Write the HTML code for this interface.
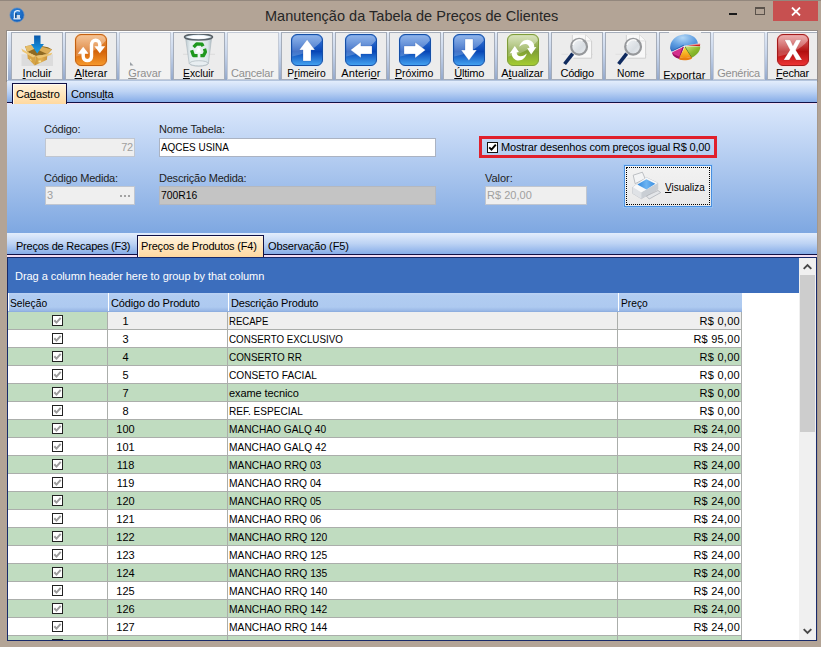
<!DOCTYPE html>
<html lang="pt-BR"><head><meta charset="utf-8"><title>Manutenção da Tabela de Preços de Clientes</title>
<style>
*{box-sizing:border-box;margin:0;padding:0}
html,body{width:821px;height:647px;overflow:hidden;background:#b3a496}
body{font-family:"Liberation Sans",sans-serif;font-size:11px;color:#000}
u{text-decoration:underline;text-underline-offset:1px;text-decoration-thickness:1px}
span{white-space:nowrap}
#win{position:absolute;left:0;top:0;width:821px;height:647px;background:#b3a496;overflow:hidden}
#topline{position:absolute;left:0;top:0;width:821px;height:1px;background:#93877d}
#appicon{position:absolute;left:8px;top:6px}
#title{position:absolute;left:265px;top:5px;height:22px;line-height:22px;font-size:14.5px;color:#262626;white-space:nowrap}
#btn-min{position:absolute;left:729px;top:13px;width:8px;height:2px;background:#1a1a1a}
#btn-max{position:absolute;left:755px;top:7px;width:10px;height:8px;border:1px solid #5a524b;border-top-width:2px}
#btn-close{position:absolute;left:773px;top:1px;width:45px;height:20px;background:#c75050}
#btn-close svg{position:absolute;left:18px;top:6px}
#edge{position:absolute;left:6px;top:30px;width:812px;height:52px;border:1px solid #948d88;border-bottom:none}
#toolbar{position:absolute;left:7px;top:31px;width:810px;height:50px;background:linear-gradient(#e3ebf7,#c6d4ea 45%,#93a8cb);border-top:1px solid #fff;border-bottom:1px solid #b3c4dd;box-shadow:inset 1px 0 0 #f4f8fd;overflow:hidden}
.tb{position:absolute;top:0;width:52px;height:48px;background:#ececec;border:1px solid #a5adba}
.tb.dis{background:#f2f2f2;border-color:#c3cad6}
.tb svg{position:absolute;left:9px;top:1px}
.tb svg.sq{left:8px;top:0}
.tb .lab{position:absolute;width:80px;top:34px;height:13px;line-height:13px;text-align:center;white-space:nowrap}
.tb.dis .lab{color:#8f8f8f}
.tb.exp .lab{top:36px}
.tabs{position:absolute;left:7px;width:810px;height:22px;background:linear-gradient(#e3edfc,#bdd3f4 50%,#86ade8);border-bottom:1px solid #101045}
#tabs1{top:81px}
#tabs2{top:233px}
.pink{position:absolute;left:7px;width:810px;background:#f3def3}
.tab{position:absolute;top:2px;height:19px}
.tab .tl{position:absolute;top:5px;line-height:13px}
.tab.act{background:linear-gradient(#fff3dc,#ffd9a0);border:1px solid #101045;border-bottom:none;height:20px;box-shadow:inset 1px 1px 0 #fffaf0}
.tab.act .tl{top:4px;margin-left:-1px}
.tabs{z-index:2}
#tabs1 .tab.act{height:21px}
#tabs2 .tab.act{height:22px}
#panel{position:absolute;left:7px;top:104px;width:810px;height:129px;background:linear-gradient(#dbe8fc,#7ea7e1)}
.lbl{position:absolute;white-space:nowrap;line-height:13px;color:#1e1e1e}
.inp{position:absolute;height:19px;line-height:17px;border:1px solid #abb3c2;background:#fff;padding:0 1px;white-space:nowrap;overflow:hidden}
.inp.dis{background:#efefef;color:#a0a0a0;border-color:#c0c6d0}
.inp.ro{background:#c4c4c4;border-color:#b4b8bf}
.inp.r{text-align:right}
.dots{position:absolute;right:4px;top:8px;width:10px;height:2px}
.dots i{position:absolute;top:0;width:2px;height:2px;background:#a2a2a2}
.dots i:nth-child(1){left:0}.dots i:nth-child(2){left:4px}.dots i:nth-child(3){left:8px}
#redbox{position:absolute;left:472px;top:32px;width:238px;height:22px;border:3px solid #e0202c}
.cb{position:absolute;left:5px;top:3px;width:11px;height:11px;background:#fff;border:1px solid #111}
.cb svg{position:absolute;left:0;top:0}
.cbl{position:absolute;left:19px;top:2px;line-height:13px;white-space:nowrap}
#btnvis{position:absolute;left:617px;top:61px;width:88px;height:42px;background:linear-gradient(#f2f2f2,#e9e9e9);border:1px solid #4a8fe0;box-shadow:0 0 0 1px rgba(150,200,250,0.6)}
#btnvis .focus{position:absolute;left:1px;top:1px;right:1px;bottom:1px;border:1px dotted #000}
#btnvis svg{position:absolute;left:5px;top:4px}
#btnvis .bl{position:absolute;left:40px;top:15px;line-height:13px}
#grid{position:absolute;left:7px;top:257px;width:810px;height:384px;background:#fff;border:1px solid #182a6a;overflow:hidden}
#groupby{position:absolute;left:0;top:0;width:791px;height:35px;background:#3c6ebd;color:#fff;line-height:37px;padding-left:7px;white-space:nowrap}
#hdr{position:absolute;left:0;top:35px;width:734px;height:19px;background:linear-gradient(#bbd2f4,#b1ccf1 15%,#aecaf0 78%,#97b6e5);border-bottom:1px solid #8fafe0}
.hc{position:absolute;top:0;height:18px;line-height:20px;padding-left:2px;border-left:1px solid #fff;white-space:nowrap}
.hc:first-child{padding-left:1px}
.row{position:absolute;left:0;width:734px;height:18px;border-bottom:1px solid #abaeab}
.row.g{background:#c0dcc0}
.row.w{background:#fff}
.row.foc .c2,.row.foc .c3,.row.foc .c4{background:#efefef}
.c{position:absolute;top:0;height:17px;line-height:18px;white-space:nowrap;border-right:1px solid #abaeab}
.c1{left:0;width:100px}
.c2{left:100px;width:120px}
.c2 .n{position:absolute;left:0;width:35px;text-align:center}
.c3{left:220px;width:390px;padding-left:1px}
.c4{left:610px;width:124px;text-align:right;padding-right:1px}
.ck{position:absolute;left:44px;top:3px;width:11px;height:11px;border:1px solid #222;background:#fff}
.ck svg{position:absolute;left:0;top:0}
#sb{position:absolute;left:791px;top:0;width:17px;height:382px;background:#f0f0f0}
#sb .up{position:absolute;left:0;top:0;width:17px;height:17px}
#sb .dn{position:absolute;left:0;bottom:0;width:17px;height:17px}
#sb .thumb{position:absolute;left:1px;top:17px;width:15px;height:157px;background:#cdcdcd}
#sb svg{position:absolute;left:4px;top:5px}
#rcol{position:absolute;left:817px;top:82px;width:1px;height:559px;background:#a5988c}
</style></head><body>
<div id="win">
<div id="topline"></div>
<svg id="appicon" width="18" height="18" viewBox="0 0 18 18"><defs><radialGradient id="gapp" cx="0.400" cy="0.350" r="0.700"><stop offset="0" stop-color="#2f86dc"/><stop offset="1" stop-color="#0f5cb8"/></radialGradient></defs><circle cx="9" cy="9" r="7.100" fill="url(#gapp)" stroke="#5a8fcd" stroke-width="0.700"/><path d="M6.400 12.500V7.200C6.400 4.800 9.500 3.900 12 5.200" fill="none" stroke="#e6f0fb" stroke-width="1.200"/><rect x="7.500" y="7.200" width="1" height="4.500" fill="#0a2a55"/><rect x="8.700" y="9" width="3.300" height="3.200" fill="#d0dceb"/><rect x="5.400" y="12.200" width="7.200" height="1.200" fill="#f2f7fd"/></svg>
<div id="title"><span style="letter-spacing:0.023px;">Manutenção da Tabela de Preços de Clientes</span></div>
<div id="btn-min"></div><div id="btn-max"></div><div id="btn-close"><svg width="10" height="9" viewBox="0 0 10 9"><path d="M1 0.500L9 8.500M9 0.500L1 8.500" stroke="#fff" stroke-width="1.800" fill="none"/></svg></div>
<div id="edge"></div><div id="rcol"></div>
<div id="toolbar">
<div class="tb" style="left:4px"><svg width="32" height="32" viewBox="0 0 32 32"><defs><linearGradient id="gar" x1="0" y1="0" x2="0" y2="1"><stop offset="0" stop-color="#0a58aa"/><stop offset="1" stop-color="#1aa4ec"/></linearGradient><linearGradient id="gbx" x1="0" y1="0" x2="1" y2="0"><stop offset="0" stop-color="#c99434"/><stop offset="0.500" stop-color="#e2b254"/><stop offset="1" stop-color="#c89038"/></linearGradient></defs><rect x="0.500" y="20.300" width="31.500" height="11.700" fill="#dcdcdc"/><path d="M4 12.200L14 10.800L27 13.200L31 15.400L26.500 20.300L14.800 21.900L6.200 18Z" fill="#8f6a22"/><path d="M4 12.200L14 10.800L16.500 13.500L6.200 18Z" fill="#e6bd68"/><path d="M18 12L31 15.400L26.500 20.300L16.500 15.500Z" fill="#dcae58"/><path d="M6.200 18L14.800 21.900L13.700 31.400L6.700 24.200Z" fill="#d7a344"/><path d="M14.800 21.900L26.500 20.300L25.900 25.800L13.700 31.400Z" fill="url(#gbx)"/><path d="M0.300 14.400L6.200 18L14.800 21.900L12 23.500L1.500 17.500Z" fill="#eec878"/><path d="M14.800 21.900L26.500 20.300L31.500 18.600L30 21L17.500 24.500Z" fill="#ecc470"/><path d="M17.500 26.500h2.500v1.800h-2.500z" fill="#f6e6a0"/><path d="M9 24.500l1.500 1.200v1.600L9 26z" fill="#f2dc90"/><path d="M13.100 1.600H19.500V10H22.900L16.200 19.400L10 10H13.100Z" fill="url(#gar)"/></svg><span class="lab" style="left:-14.9px"><span style="letter-spacing:-0.051px;"><u>I</u>ncluir</span></span></div>
<div class="tb" style="left:58px"><svg width="34" height="34" viewBox="-1 -1 34 34" class="sq"><defs><linearGradient id="ga" x1="0" y1="0" x2="0" y2="1"><stop offset="0" stop-color="#ee9a4c"/><stop offset="0.550" stop-color="#d4640a"/><stop offset="1" stop-color="#f79a2c"/></linearGradient><linearGradient id="ha" x1="0" y1="0" x2="0" y2="1"><stop offset="0" stop-color="#fff" stop-opacity="0.420"/><stop offset="1" stop-color="#fff" stop-opacity="0.200"/></linearGradient></defs><rect x="-0.500" y="-0.500" width="33" height="33" rx="6.500" fill="none" stroke="#fde3c4" stroke-opacity="0.700" stroke-width="1"/><rect x="0.500" y="0.500" width="31" height="31" rx="5.500" fill="url(#ga)" stroke="#c46010" stroke-width="1"/><path d="M1.200 22.500C12 20.500 24 15.500 30.800 6.500V6.500a5.300 5.300 0 0 0-5.300-5.300H6.500a5.300 5.300 0 0 0-5.300 5.300Z" fill="url(#ha)"/><path d="M8.200 19V22.500a4.150 4.150 0 0 0 8.300 0V10.400a4.150 4.150 0 0 1 8.300 0V13" fill="none" stroke="#fff" stroke-width="3.400"/><path d="M2.800 19.800L8.200 12.800L13.600 19.800Z" fill="#fff"/><path d="M19.400 12.300L24.800 19.300L30.200 12.300Z" fill="#fff"/></svg><span class="lab" style="left:-15.0px"><span style="letter-spacing:0.056px;"><u>A</u>lterar</span></span></div>
<div class="tb dis" style="left:112px"><svg width="4" height="4" viewBox="0 0 4 4" style="left:10px;top:29px"><path d="M0 0L3.500 3.500H0Z" fill="#9aa0a6"/></svg><span class="lab" style="left:-15.2px"><span style="letter-spacing:-0.054px;"><u>G</u>ravar</span></span></div>
<div class="tb" style="left:166px"><svg width="32" height="33" viewBox="0 0 32 33"><defs><linearGradient id="gbin" x1="0" y1="0" x2="1" y2="0"><stop offset="0" stop-color="#b9c7cd"/><stop offset="0.180" stop-color="#e4edf0"/><stop offset="0.500" stop-color="#eef3f5"/><stop offset="0.850" stop-color="#dbe5e9"/><stop offset="1" stop-color="#adbcc3"/></linearGradient></defs><path d="M0 20.300H6M26 20.300H32" stroke="#d8d8d8" stroke-width="0.800"/><path d="M2.500 3.500L6.200 29.500C7 33 24.600 33 25.400 29.500L28.700 3.500Z" fill="url(#gbin)" stroke="#a9b6bc" stroke-width="0.600"/><ellipse cx="15.800" cy="29.300" rx="9.200" ry="2.600" fill="#e8eef1" stroke="#aab6bc" stroke-width="0.700"/><ellipse cx="15.500" cy="3" rx="14" ry="2.900" fill="#e4f0f7" stroke="#596268" stroke-width="1.500"/><ellipse cx="15.500" cy="3.300" rx="10" ry="1.500" fill="#fff"/><g fill="none" stroke="#1f981f" stroke-width="3.300" stroke-linejoin="round"><path d="M10.600 13.200L13.700 9.800L19 10.200L20 12.200"/><path d="M8.600 16.200L10.400 21.600H14.600"/><path d="M21.500 14.700L22.400 18L20.400 21.600H17.400"/></g><path d="M15.600 12.500L18.500 18.500H12.700Z" fill="#fff" opacity="0.900"/></svg><span class="lab" style="left:-15.2px"><span style="display:inline-block;transform:scaleX(0.9420);transform-origin:center center;"><u>E</u>xcluir</span></span></div>
<div class="tb dis" style="left:220px"><span class="lab" style="left:-15.6px"><span style="letter-spacing:-0.154px;">Ca<u>n</u>celar</span></span></div>
<div class="tb" style="left:274px"><svg width="34" height="34" viewBox="-1 -1 34 34" class="sq"><defs><linearGradient id="gu" x1="0" y1="0" x2="0" y2="1"><stop offset="0" stop-color="#3f7fdc"/><stop offset="0.550" stop-color="#0746b6"/><stop offset="1" stop-color="#45a4f2"/></linearGradient><linearGradient id="hu" x1="0" y1="0" x2="0" y2="1"><stop offset="0" stop-color="#fff" stop-opacity="0.420"/><stop offset="1" stop-color="#fff" stop-opacity="0.200"/></linearGradient></defs><rect x="-0.500" y="-0.500" width="33" height="33" rx="6.500" fill="none" stroke="#dbe8fa" stroke-opacity="0.700" stroke-width="1"/><rect x="0.500" y="0.500" width="31" height="31" rx="5.500" fill="url(#gu)" stroke="#154fa6" stroke-width="1"/><path d="M1.200 22.500C12 20.500 24 15.500 30.800 6.500V6.500a5.300 5.300 0 0 0-5.300-5.300H6.500a5.300 5.300 0 0 0-5.300 5.300Z" fill="url(#hu)"/><path d="M16.100 5.600L23.900 15.900H20V27H12V15.900H8.300Z" fill="#fff" stroke="#1a4a9a" stroke-opacity="0.350" stroke-width="0.600" transform="rotate(0 16 16)"/></svg><span class="lab" style="left:-15.4px"><span style="display:inline-block;transform:scaleX(0.9349);transform-origin:center center;">P<u>r</u>imeiro</span></span></div>
<div class="tb" style="left:328px"><svg width="34" height="34" viewBox="-1 -1 34 34" class="sq"><defs><linearGradient id="gl" x1="0" y1="0" x2="0" y2="1"><stop offset="0" stop-color="#3f7fdc"/><stop offset="0.550" stop-color="#0746b6"/><stop offset="1" stop-color="#45a4f2"/></linearGradient><linearGradient id="hl" x1="0" y1="0" x2="0" y2="1"><stop offset="0" stop-color="#fff" stop-opacity="0.420"/><stop offset="1" stop-color="#fff" stop-opacity="0.200"/></linearGradient></defs><rect x="-0.500" y="-0.500" width="33" height="33" rx="6.500" fill="none" stroke="#dbe8fa" stroke-opacity="0.700" stroke-width="1"/><rect x="0.500" y="0.500" width="31" height="31" rx="5.500" fill="url(#gl)" stroke="#154fa6" stroke-width="1"/><path d="M1.200 22.500C12 20.500 24 15.500 30.800 6.500V6.500a5.300 5.300 0 0 0-5.300-5.300H6.500a5.300 5.300 0 0 0-5.300 5.300Z" fill="url(#hl)"/><path d="M16.100 5.600L23.900 15.900H20V27H12V15.900H8.300Z" fill="#fff" stroke="#1a4a9a" stroke-opacity="0.350" stroke-width="0.600" transform="rotate(270 16 16)"/></svg><span class="lab" style="left:-15.1px"><span style="letter-spacing:0.094px;">Anteri<u>o</u>r</span></span></div>
<div class="tb" style="left:382px"><svg width="34" height="34" viewBox="-1 -1 34 34" class="sq"><defs><linearGradient id="gr" x1="0" y1="0" x2="0" y2="1"><stop offset="0" stop-color="#3f7fdc"/><stop offset="0.550" stop-color="#0746b6"/><stop offset="1" stop-color="#45a4f2"/></linearGradient><linearGradient id="hr" x1="0" y1="0" x2="0" y2="1"><stop offset="0" stop-color="#fff" stop-opacity="0.420"/><stop offset="1" stop-color="#fff" stop-opacity="0.200"/></linearGradient></defs><rect x="-0.500" y="-0.500" width="33" height="33" rx="6.500" fill="none" stroke="#dbe8fa" stroke-opacity="0.700" stroke-width="1"/><rect x="0.500" y="0.500" width="31" height="31" rx="5.500" fill="url(#gr)" stroke="#154fa6" stroke-width="1"/><path d="M1.200 22.500C12 20.500 24 15.500 30.800 6.500V6.500a5.300 5.300 0 0 0-5.300-5.300H6.500a5.300 5.300 0 0 0-5.300 5.300Z" fill="url(#hr)"/><path d="M16.100 5.600L23.900 15.900H20V27H12V15.900H8.300Z" fill="#fff" stroke="#1a4a9a" stroke-opacity="0.350" stroke-width="0.600" transform="rotate(90 16 16)"/></svg><span class="lab" style="left:-15.5px"><span style="display:inline-block;transform:scaleX(0.9539);transform-origin:center center;"><u>P</u>róximo</span></span></div>
<div class="tb" style="left:436px"><svg width="34" height="34" viewBox="-1 -1 34 34" class="sq"><defs><linearGradient id="gd" x1="0" y1="0" x2="0" y2="1"><stop offset="0" stop-color="#3f7fdc"/><stop offset="0.550" stop-color="#0746b6"/><stop offset="1" stop-color="#45a4f2"/></linearGradient><linearGradient id="hd" x1="0" y1="0" x2="0" y2="1"><stop offset="0" stop-color="#fff" stop-opacity="0.420"/><stop offset="1" stop-color="#fff" stop-opacity="0.200"/></linearGradient></defs><rect x="-0.500" y="-0.500" width="33" height="33" rx="6.500" fill="none" stroke="#dbe8fa" stroke-opacity="0.700" stroke-width="1"/><rect x="0.500" y="0.500" width="31" height="31" rx="5.500" fill="url(#gd)" stroke="#154fa6" stroke-width="1"/><path d="M1.200 22.500C12 20.500 24 15.500 30.800 6.500V6.500a5.300 5.300 0 0 0-5.300-5.300H6.500a5.300 5.300 0 0 0-5.300 5.300Z" fill="url(#hd)"/><path d="M16.100 5.600L23.900 15.900H20V27H12V15.900H8.300Z" fill="#fff" stroke="#1a4a9a" stroke-opacity="0.350" stroke-width="0.600" transform="rotate(180 16 16)"/></svg><span class="lab" style="left:-14.8px"><span style="letter-spacing:-0.231px;"><u>Ú</u>ltimo</span></span></div>
<div class="tb" style="left:490px"><svg width="34" height="34" viewBox="-1 -1 34 34" class="sq"><defs><linearGradient id="gf" x1="0" y1="0" x2="0" y2="1"><stop offset="0" stop-color="#bdd08c"/><stop offset="0.550" stop-color="#80a036"/><stop offset="1" stop-color="#a6ce30"/></linearGradient><linearGradient id="hf" x1="0" y1="0" x2="0" y2="1"><stop offset="0" stop-color="#fff" stop-opacity="0.420"/><stop offset="1" stop-color="#fff" stop-opacity="0.200"/></linearGradient></defs><rect x="-0.500" y="-0.500" width="33" height="33" rx="6.500" fill="none" stroke="#eef5d8" stroke-opacity="0.700" stroke-width="1"/><rect x="0.500" y="0.500" width="31" height="31" rx="5.500" fill="url(#gf)" stroke="#7e9c3a" stroke-width="1"/><path d="M1.200 22.500C12 20.500 24 15.500 30.800 6.500V6.500a5.300 5.300 0 0 0-5.300-5.300H6.500a5.300 5.300 0 0 0-5.300 5.300Z" fill="url(#hf)"/><path d="M12.300 12.800C13.500 7.500 19 4.300 23.300 6.500C26.300 8 27.600 11 27.300 13.300L29.400 13L24.200 20.400L20.100 14.300L22.400 14C22.200 11.700 20.700 10.200 18.600 10.100C16.200 10 14 11.200 12.300 12.800Z" fill="#fff"/><path d="M12.300 12.800C13.500 7.500 19 4.300 23.300 6.500C26.300 8 27.600 11 27.300 13.300L29.400 13L24.200 20.400L20.100 14.300L22.400 14C22.200 11.700 20.700 10.200 18.600 10.100C16.200 10 14 11.200 12.300 12.800Z" fill="#fff" transform="rotate(180 16 16.200)"/></svg><span class="lab" style="left:-15.6px"><span style="letter-spacing:-0.079px;">A<u>t</u>ualizar</span></span></div>
<div class="tb" style="left:544px"><svg width="32" height="32" viewBox="0 0 32 32"><defs><linearGradient id="gln" x1="0" y1="0" x2="1" y2="1"><stop offset="0" stop-color="#f4f6f8"/><stop offset="0.600" stop-color="#d8dde2"/><stop offset="1" stop-color="#eef1f4"/></linearGradient></defs><path d="M0.500 20.300H7M28 20.300H32" stroke="#dcdcdc" stroke-width="0.800"/><path d="M11.200 1H24.500L30.600 6.900V24.200H11.200Z" fill="#f8f8f8"/><path d="M24.500 1L30.600 6.900V24.200H12.500" fill="none" stroke="#cfcfcf" stroke-width="1"/><path d="M11.400 1V9" stroke="#c4c4c4" stroke-width="0.700"/><path d="M24.500 1V6.900H30.600" fill="#fafafa" stroke="#d4d4d4" stroke-width="0.700"/><path d="M11.700 19.700L3.600 30" stroke="#0f2a5e" stroke-width="3.600" stroke-linecap="butt"/><circle cx="18.100" cy="12.700" r="7.900" fill="url(#gln)" stroke="#96989b" stroke-width="2.200"/><path d="M12 11a6.300 6.300 0 0 1 9.500-4.200" stroke="#fff" stroke-width="1.500" fill="none" opacity="0.900"/></svg><span class="lab" style="left:-14.9px"><span style="letter-spacing:-0.260px;">Código</span></span></div>
<div class="tb" style="left:598px"><svg width="32" height="32" viewBox="0 0 32 32"><defs><linearGradient id="gln" x1="0" y1="0" x2="1" y2="1"><stop offset="0" stop-color="#f4f6f8"/><stop offset="0.600" stop-color="#d8dde2"/><stop offset="1" stop-color="#eef1f4"/></linearGradient></defs><path d="M0.500 20.300H7M28 20.300H32" stroke="#dcdcdc" stroke-width="0.800"/><path d="M11.200 1H24.500L30.600 6.900V24.200H11.200Z" fill="#f8f8f8"/><path d="M24.500 1L30.600 6.900V24.200H12.500" fill="none" stroke="#cfcfcf" stroke-width="1"/><path d="M11.400 1V9" stroke="#c4c4c4" stroke-width="0.700"/><path d="M24.500 1V6.900H30.600" fill="#fafafa" stroke="#d4d4d4" stroke-width="0.700"/><path d="M11.700 19.700L3.600 30" stroke="#0f2a5e" stroke-width="3.600" stroke-linecap="butt"/><circle cx="18.100" cy="12.700" r="7.900" fill="url(#gln)" stroke="#96989b" stroke-width="2.200"/><path d="M12 11a6.300 6.300 0 0 1 9.500-4.200" stroke="#fff" stroke-width="1.500" fill="none" opacity="0.900"/></svg><span class="lab" style="left:-15.0px"><span style="display:inline-block;transform:scaleX(0.9304);transform-origin:center center;">Nome</span></span></div>
<div class="tb exp" style="left:652px"><svg width="32" height="32" viewBox="0 0 32 32" style="overflow:visible"><defs><radialGradient id="gpb" cx="0.450" cy="0.200" r="0.800"><stop offset="0" stop-color="#b4d8f6"/><stop offset="0.600" stop-color="#5b9be0"/><stop offset="1" stop-color="#3a78c8"/></radialGradient><linearGradient id="gpy" x1="0" y1="0" x2="0" y2="1"><stop offset="0" stop-color="#fbe23a"/><stop offset="1" stop-color="#f28c12"/></linearGradient><linearGradient id="gpg" x1="0" y1="0" x2="1" y2="1"><stop offset="0" stop-color="#cfe47a"/><stop offset="0.500" stop-color="#8cba2c"/><stop offset="1" stop-color="#6a9c1c"/></linearGradient></defs><rect x="0" y="-2" width="32" height="3" fill="#ececec"/><path d="M14.800 12.700L3.300 18.300C3.300 21.500 6 23.800 10.600 24.700Z" fill="#d42f8c"/><path d="M14.800 12.700L10.600 24.700L9.600 24.400L13.600 13.200Z" fill="#8e0e58"/><path d="M3.300 18.300C3.300 21.500 6 23.800 10 24.600V22.400C6.500 21.600 4 20 3.300 18.300Z" fill="#9e1060"/><path d="M15.800 13.200L22.800 22.500C19 24.200 14 24.400 10.400 23.600Z" fill="url(#gpy)"/><path d="M10.400 23.600C14 24.400 19 24.200 22.800 22.500V24.800C19 26.500 14 26.600 10.400 25.800Z" fill="#e87e10"/><path d="M16.300 12.500L31.200 12.500C31.500 17 28 21 23.200 23.500Z" fill="url(#gpg)"/><path d="M16.300 12.500L23.200 23.500L22.600 23.800L15.800 13.200Z" fill="#4f7a14"/><path d="M17.300 11.300L31.200 10.300L30.900 12.300Z" fill="#d02020"/><path d="M17.300 11.300L31.200 10.300L31 9.600Z" fill="#f09090"/><path d="M14.800 11.800L2.800 17.600C-1.500 11 4 1.200 15 0.400C23 -0.100 28.500 4.500 28.900 9.600Z" fill="url(#gpb)"/><path d="M2.800 17.600C1.500 15.500 1 13.500 1.200 12C1.500 14 2.200 15.500 3.200 16.400L14.800 10.800V11.800Z" fill="#2a62b4"/></svg><span class="lab" style="left:-15.7px"><span style="letter-spacing:0.078px;">Exportar</span></span></div>
<div class="tb dis" style="left:706px"><span class="lab" style="left:-15.4px"><span style="letter-spacing:-0.230px;">Genérica</span></span></div>
<div class="tb" style="left:760px"><svg width="34" height="34" viewBox="-1 -1 34 34" class="sq"><defs><linearGradient id="gc" x1="0" y1="0" x2="0" y2="1"><stop offset="0" stop-color="#e07878"/><stop offset="0.550" stop-color="#b20e0e"/><stop offset="1" stop-color="#ee3434"/></linearGradient><linearGradient id="hc" x1="0" y1="0" x2="0" y2="1"><stop offset="0" stop-color="#fff" stop-opacity="0.420"/><stop offset="1" stop-color="#fff" stop-opacity="0.200"/></linearGradient></defs><rect x="-0.500" y="-0.500" width="33" height="33" rx="6.500" fill="none" stroke="#fbdada" stroke-opacity="0.700" stroke-width="1"/><rect x="0.500" y="0.500" width="31" height="31" rx="5.500" fill="url(#gc)" stroke="#a31a1a" stroke-width="1"/><path d="M1.200 22.500C12 20.500 24 15.500 30.800 6.500V6.500a5.300 5.300 0 0 0-5.300-5.300H6.500a5.300 5.300 0 0 0-5.300 5.300Z" fill="url(#hc)"/><path d="M7.500 5.800H13.100L15.900 11.800L19.200 5.800H24.200L18.700 15.900L25 25.900H19.200L15.900 19.900L12.200 25.900H6.700L13 15.900Z" fill="#fff" stroke="#7a0c0c" stroke-opacity="0.300" stroke-width="0.500"/></svg><span class="lab" style="left:-15.5px"><span style="letter-spacing:-0.228px;"><u>F</u>echar</span></span></div>
</div>
<div id="tabs1" class="tabs"><div class="tab act" style="left:5px;width:55px"><span class="tl" style="left:4px"><span style="letter-spacing:-0.107px;">Ca<u>d</u>astro</span></span></div><div class="tab" style="left:60px;width:52px"><span class="tl" style="left:4px"><span style="letter-spacing:-0.117px;">Consu<u>l</u>ta</span></span></div></div>
<div class="pink" style="top:103px;height:1px"></div>
<div id="panel">
<span class="lbl" style="left:37px;top:19px"><span style="letter-spacing:-0.232px;">Código:</span></span>
<div class="inp dis r" style="left:38px;top:34px;width:90px"><span style="letter-spacing:-0.225px;">72</span></div>
<span class="lbl" style="left:152px;top:19px"><span style="letter-spacing:-0.156px;">Nome Tabela:</span></span>
<div class="inp" style="left:152px;top:34px;width:277px"><span style="display:inline-block;transform:scaleX(0.9017);transform-origin:left center;">AQCES USINA</span></div>
<span class="lbl" style="left:37px;top:68px"><span style="letter-spacing:-0.233px;">Código Medida:</span></span>
<div class="inp dis" style="left:38px;top:82px;width:90px"><span>3</span><span class="dots"><i></i><i></i><i></i></span></div>
<span class="lbl" style="left:152px;top:68px"><span style="letter-spacing:-0.223px;">Descrição Medida:</span></span>
<div class="inp ro" style="left:152px;top:82px;width:277px"><span style="display:inline-block;transform:scaleX(0.9417);transform-origin:left center;">700R16</span></div>
<div id="redbox"><span class="cb"><svg width="9" height="9" viewBox="0 0 9 9"><path d="M1.200 4.300L3.500 6.700L7.800 1.600" stroke="#000" stroke-width="1.900" fill="none"/></svg></span><span class="cbl"><span style="letter-spacing:-0.160px;">Mostrar desenhos com preços igual R$ 0,00</span></span></div>
<span class="lbl" style="left:478px;top:68px"><span style="letter-spacing:-0.020px;">Valor:</span></span>
<div class="inp dis" style="left:478px;top:82px;width:102px"><span style="letter-spacing:0.018px;">R$ 20,00</span></div>
<div id="btnvis"><div class="focus"></div><svg width="32" height="30" viewBox="630 170 32 30"><defs><linearGradient id="gpt" x1="0" y1="0" x2="1" y2="0"><stop offset="0" stop-color="#2f86dc"/><stop offset="0.500" stop-color="#6db4f2"/><stop offset="1" stop-color="#3a8ee0"/></linearGradient></defs><path d="M633.200 175.200L642.400 172.200L645.100 178.600L635.200 183.700Z" fill="#f3f4f5" stroke="#aeb3b8" stroke-width="0.800"/><path d="M632.800 187.100L646.400 177.600L657.700 183L657.700 189.200L641.300 198.700L632.500 193.300Z" fill="#eceef0" stroke="#b4b8be" stroke-width="0.700"/><path d="M632.800 187.100L641.300 192.300V198.700L632.500 193.300Z" fill="#dfe2e6"/><path d="M641.300 192.300L657.700 183V189.200L641.300 198.700Z" fill="#c9ced4"/><path d="M632.800 187.100L646.400 177.600L657.700 183L641.300 192.300Z" fill="#f7f8f9"/><path d="M637.300 184.400L646.400 179.300L655.300 183.700L646.400 189.500Z" fill="url(#gpt)"/><path d="M646.400 196L658 190.500L660.700 192.600L649.200 199Z" fill="#e4e6e9" stroke="#a6abb1" stroke-width="0.700"/></svg><span class="bl"><span style="display:inline-block;transform:scaleX(0.9081);transform-origin:left center;"><u>V</u>isualiza</span></span></div>
</div>
<div id="tabs2" class="tabs"><div class="tab" style="left:3px;width:127px"><span class="tl" style="left:6px"><span style="letter-spacing:-0.224px;">Preços de Recapes (F3)</span></span></div><div class="tab act" style="left:130px;width:127px"><span class="tl" style="left:4px"><span style="letter-spacing:-0.176px;">Preços de Produtos (F4)</span></span></div><div class="tab" style="left:257px;width:92px"><span class="tl" style="left:4px"><span style="letter-spacing:-0.115px;">Observação (F5)</span></span></div></div>
<div class="pink" style="top:255px;height:2px"></div>
<div id="grid">
<div id="groupby"><span style="letter-spacing:-0.054px;">Drag a column header here to group by that column</span></div>
<div id="hdr"><div class="hc" style="left:0;width:99px"><span style="display:inline-block;transform:scaleX(0.9330);transform-origin:left center;">Seleção</span></div><div class="hc" style="left:100px;width:119px"><span style="letter-spacing:-0.173px;">Código do Produto</span></div><div class="hc" style="left:220px;width:389px"><span style="letter-spacing:-0.188px;">Descrição Produto</span></div><div class="hc" style="left:610px;width:124px"><span style="display:inline-block;transform:scaleX(0.9322);transform-origin:left center;">Preço</span></div></div>
<div class="row g foc" style="top:54px"><div class="c c1"><i class="ck"><svg width="9" height="9" viewBox="0 0 9 9"><path d="M1.300 4.200L3.500 6.600L7.700 1.800" stroke="#9c9c9c" stroke-width="2" fill="none"/></svg></i></div><div class="c c2"><span class="n">1</span></div><div class="c c3"><span style="display:inline-block;transform:scaleX(0.8707);transform-origin:left center;">RECAPE</span></div><div class="c c4"><span style="letter-spacing:0.296px;">R$ 0,00</span></div></div>
<div class="row w" style="top:72px"><div class="c c1"><i class="ck"><svg width="9" height="9" viewBox="0 0 9 9"><path d="M1.300 4.200L3.500 6.600L7.700 1.800" stroke="#9c9c9c" stroke-width="2" fill="none"/></svg></i></div><div class="c c2"><span class="n">3</span></div><div class="c c3"><span style="display:inline-block;transform:scaleX(0.8893);transform-origin:left center;">CONSERTO EXCLUSIVO</span></div><div class="c c4"><span style="letter-spacing:0.243px;">R$ 95,00</span></div></div>
<div class="row g" style="top:90px"><div class="c c1"><i class="ck"><svg width="9" height="9" viewBox="0 0 9 9"><path d="M1.300 4.200L3.500 6.600L7.700 1.800" stroke="#9c9c9c" stroke-width="2" fill="none"/></svg></i></div><div class="c c2"><span class="n">4</span></div><div class="c c3"><span style="display:inline-block;transform:scaleX(0.9000);transform-origin:left center;">CONSERTO RR</span></div><div class="c c4"><span style="letter-spacing:0.296px;">R$ 0,00</span></div></div>
<div class="row w" style="top:108px"><div class="c c1"><i class="ck"><svg width="9" height="9" viewBox="0 0 9 9"><path d="M1.300 4.200L3.500 6.600L7.700 1.800" stroke="#9c9c9c" stroke-width="2" fill="none"/></svg></i></div><div class="c c2"><span class="n">5</span></div><div class="c c3"><span style="display:inline-block;transform:scaleX(0.9227);transform-origin:left center;">CONSETO FACIAL</span></div><div class="c c4"><span style="letter-spacing:0.296px;">R$ 0,00</span></div></div>
<div class="row g" style="top:126px"><div class="c c1"><i class="ck"><svg width="9" height="9" viewBox="0 0 9 9"><path d="M1.300 4.200L3.500 6.600L7.700 1.800" stroke="#9c9c9c" stroke-width="2" fill="none"/></svg></i></div><div class="c c2"><span class="n">7</span></div><div class="c c3"><span style="letter-spacing:-0.088px;">exame tecnico</span></div><div class="c c4"><span style="letter-spacing:0.296px;">R$ 0,00</span></div></div>
<div class="row w" style="top:144px"><div class="c c1"><i class="ck"><svg width="9" height="9" viewBox="0 0 9 9"><path d="M1.300 4.200L3.500 6.600L7.700 1.800" stroke="#9c9c9c" stroke-width="2" fill="none"/></svg></i></div><div class="c c2"><span class="n">8</span></div><div class="c c3"><span style="display:inline-block;transform:scaleX(0.9145);transform-origin:left center;">REF. ESPECIAL</span></div><div class="c c4"><span style="letter-spacing:0.296px;">R$ 0,00</span></div></div>
<div class="row g" style="top:162px"><div class="c c1"><i class="ck"><svg width="9" height="9" viewBox="0 0 9 9"><path d="M1.300 4.200L3.500 6.600L7.700 1.800" stroke="#9c9c9c" stroke-width="2" fill="none"/></svg></i></div><div class="c c2"><span class="n">100</span></div><div class="c c3"><span style="display:inline-block;transform:scaleX(0.9235);transform-origin:left center;">MANCHAO GALQ 40</span></div><div class="c c4"><span style="letter-spacing:0.243px;">R$ 24,00</span></div></div>
<div class="row w" style="top:180px"><div class="c c1"><i class="ck"><svg width="9" height="9" viewBox="0 0 9 9"><path d="M1.300 4.200L3.500 6.600L7.700 1.800" stroke="#9c9c9c" stroke-width="2" fill="none"/></svg></i></div><div class="c c2"><span class="n">101</span></div><div class="c c3"><span style="display:inline-block;transform:scaleX(0.9254);transform-origin:left center;">MANCHAO GALQ 42</span></div><div class="c c4"><span style="letter-spacing:0.243px;">R$ 24,00</span></div></div>
<div class="row g" style="top:198px"><div class="c c1"><i class="ck"><svg width="9" height="9" viewBox="0 0 9 9"><path d="M1.300 4.200L3.500 6.600L7.700 1.800" stroke="#9c9c9c" stroke-width="2" fill="none"/></svg></i></div><div class="c c2"><span class="n">118</span></div><div class="c c3"><span style="display:inline-block;transform:scaleX(0.9320);transform-origin:left center;">MANCHAO RRQ 03</span></div><div class="c c4"><span style="letter-spacing:0.243px;">R$ 24,00</span></div></div>
<div class="row w" style="top:216px"><div class="c c1"><i class="ck"><svg width="9" height="9" viewBox="0 0 9 9"><path d="M1.300 4.200L3.500 6.600L7.700 1.800" stroke="#9c9c9c" stroke-width="2" fill="none"/></svg></i></div><div class="c c2"><span class="n">119</span></div><div class="c c3"><span style="display:inline-block;transform:scaleX(0.9320);transform-origin:left center;">MANCHAO RRQ 04</span></div><div class="c c4"><span style="letter-spacing:0.243px;">R$ 24,00</span></div></div>
<div class="row g" style="top:234px"><div class="c c1"><i class="ck"><svg width="9" height="9" viewBox="0 0 9 9"><path d="M1.300 4.200L3.500 6.600L7.700 1.800" stroke="#9c9c9c" stroke-width="2" fill="none"/></svg></i></div><div class="c c2"><span class="n">120</span></div><div class="c c3"><span style="display:inline-block;transform:scaleX(0.9320);transform-origin:left center;">MANCHAO RRQ 05</span></div><div class="c c4"><span style="letter-spacing:0.243px;">R$ 24,00</span></div></div>
<div class="row w" style="top:252px"><div class="c c1"><i class="ck"><svg width="9" height="9" viewBox="0 0 9 9"><path d="M1.300 4.200L3.500 6.600L7.700 1.800" stroke="#9c9c9c" stroke-width="2" fill="none"/></svg></i></div><div class="c c2"><span class="n">121</span></div><div class="c c3"><span style="display:inline-block;transform:scaleX(0.9320);transform-origin:left center;">MANCHAO RRQ 06</span></div><div class="c c4"><span style="letter-spacing:0.243px;">R$ 24,00</span></div></div>
<div class="row g" style="top:270px"><div class="c c1"><i class="ck"><svg width="9" height="9" viewBox="0 0 9 9"><path d="M1.300 4.200L3.500 6.600L7.700 1.800" stroke="#9c9c9c" stroke-width="2" fill="none"/></svg></i></div><div class="c c2"><span class="n">122</span></div><div class="c c3"><span style="display:inline-block;transform:scaleX(0.9349);transform-origin:left center;">MANCHAO RRQ 120</span></div><div class="c c4"><span style="letter-spacing:0.243px;">R$ 24,00</span></div></div>
<div class="row w" style="top:288px"><div class="c c1"><i class="ck"><svg width="9" height="9" viewBox="0 0 9 9"><path d="M1.300 4.200L3.500 6.600L7.700 1.800" stroke="#9c9c9c" stroke-width="2" fill="none"/></svg></i></div><div class="c c2"><span class="n">123</span></div><div class="c c3"><span style="display:inline-block;transform:scaleX(0.9349);transform-origin:left center;">MANCHAO RRQ 125</span></div><div class="c c4"><span style="letter-spacing:0.243px;">R$ 24,00</span></div></div>
<div class="row g" style="top:306px"><div class="c c1"><i class="ck"><svg width="9" height="9" viewBox="0 0 9 9"><path d="M1.300 4.200L3.500 6.600L7.700 1.800" stroke="#9c9c9c" stroke-width="2" fill="none"/></svg></i></div><div class="c c2"><span class="n">124</span></div><div class="c c3"><span style="display:inline-block;transform:scaleX(0.9349);transform-origin:left center;">MANCHAO RRQ 135</span></div><div class="c c4"><span style="letter-spacing:0.243px;">R$ 24,00</span></div></div>
<div class="row w" style="top:324px"><div class="c c1"><i class="ck"><svg width="9" height="9" viewBox="0 0 9 9"><path d="M1.300 4.200L3.500 6.600L7.700 1.800" stroke="#9c9c9c" stroke-width="2" fill="none"/></svg></i></div><div class="c c2"><span class="n">125</span></div><div class="c c3"><span style="display:inline-block;transform:scaleX(0.9349);transform-origin:left center;">MANCHAO RRQ 140</span></div><div class="c c4"><span style="letter-spacing:0.243px;">R$ 24,00</span></div></div>
<div class="row g" style="top:342px"><div class="c c1"><i class="ck"><svg width="9" height="9" viewBox="0 0 9 9"><path d="M1.300 4.200L3.500 6.600L7.700 1.800" stroke="#9c9c9c" stroke-width="2" fill="none"/></svg></i></div><div class="c c2"><span class="n">126</span></div><div class="c c3"><span style="display:inline-block;transform:scaleX(0.9349);transform-origin:left center;">MANCHAO RRQ 142</span></div><div class="c c4"><span style="letter-spacing:0.243px;">R$ 24,00</span></div></div>
<div class="row w" style="top:360px"><div class="c c1"><i class="ck"><svg width="9" height="9" viewBox="0 0 9 9"><path d="M1.300 4.200L3.500 6.600L7.700 1.800" stroke="#9c9c9c" stroke-width="2" fill="none"/></svg></i></div><div class="c c2"><span class="n">127</span></div><div class="c c3"><span style="display:inline-block;transform:scaleX(0.9349);transform-origin:left center;">MANCHAO RRQ 144</span></div><div class="c c4"><span style="letter-spacing:0.243px;">R$ 24,00</span></div></div>
<div class="row g" style="top:378px"><div class="c c1"><i class="ck"></i></div><div class="c c2"></div><div class="c c3"></div><div class="c c4"></div></div>
<div id="sb"><div class="up"><svg width="9" height="7" viewBox="0 0 9 7"><path d="M0.700 5.800L4.500 2L8.300 5.800" stroke="#484848" stroke-width="1.900" fill="none"/></svg></div><div class="thumb"></div><div class="dn"><svg width="9" height="7" viewBox="0 0 9 7"><path d="M0.700 1.200L4.500 5L8.300 1.200" stroke="#484848" stroke-width="1.900" fill="none"/></svg></div></div>
</div>
</div>
</body></html>
